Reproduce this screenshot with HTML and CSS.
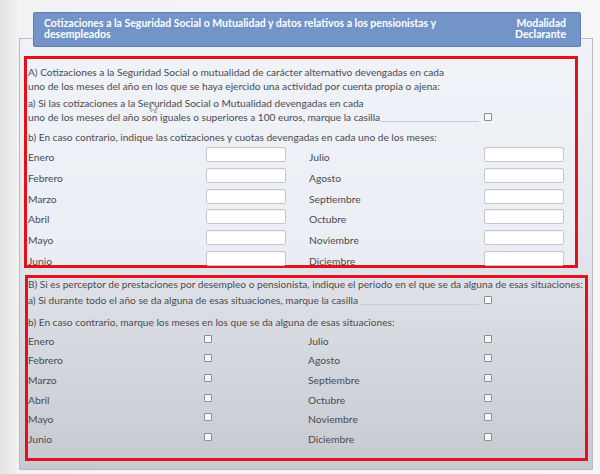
FILE: index.html
```html
<!DOCTYPE html>
<html lang="es">
<head>
<meta charset="utf-8">
<title>Cotizaciones</title>
<link rel="stylesheet" href="styles.css">
</head>
<body>
<div class="page">
  <div class="header">
    <div class="header-title">Cotizaciones a la Seguridad Social o Mutualidad y datos relativos a los pensionistas y desempleados</div>
    <div class="header-side">Modalidad<br>Declarante</div>
  </div>
  <div class="panel">
    <div class="box box-a">
      <p class="intro">A) Cotizaciones a la Seguridad Social o mutualidad de carácter alternativo devengadas en cada<br>uno de los meses del año en los que se haya ejercido una actividad por cuenta propia o ajena:</p>
      <div class="opt-a">
        <div>a) Si las cotizaciones a la Seguridad Social o Mutualidad devengadas en cada</div>
        <div class="leader-row"><span>uno de los meses del año son iguales o superiores a 100 euros, marque la casilla</span><span class="leader"></span><span class="check"></span></div>
      </div>
      <p class="opt-b">b) En caso contrario, indique las cotizaciones y cuotas devengadas en cada uno de los meses:</p>
      <div class="months-a">
        <span class="lbl">Enero</span><span class="inp"></span><span></span><span class="lbl">Julio</span><span class="inp"></span>
        <span class="lbl">Febrero</span><span class="inp"></span><span></span><span class="lbl">Agosto</span><span class="inp"></span>
        <span class="lbl">Marzo</span><span class="inp"></span><span></span><span class="lbl">Septiembre</span><span class="inp"></span>
        <span class="lbl">Abril</span><span class="inp"></span><span></span><span class="lbl">Octubre</span><span class="inp"></span>
        <span class="lbl">Mayo</span><span class="inp"></span><span></span><span class="lbl">Noviembre</span><span class="inp"></span>
        <span class="lbl">Junio</span><span class="inp"></span><span></span><span class="lbl">Diciembre</span><span class="inp"></span>
      </div>
    </div>
    <div class="box box-b">
      <p class="intro-b">B) Si es perceptor de prestaciones por desempleo o pensionista, indique el periodo en el que se da alguna de esas situaciones:</p>
      <div class="leader-row opt-ba"><span>a) Si durante todo el año se da alguna de esas situaciones, marque la casilla</span><span class="leader"></span><span class="check"></span></div>
      <p class="opt-bb">b) En caso contrario, marque los meses en los que se da alguna de esas situaciones:</p>
      <div class="months-b">
        <span class="lbl">Enero</span><span class="check"></span><span></span><span class="lbl">Julio</span><span class="check"></span>
        <span class="lbl">Febrero</span><span class="check"></span><span></span><span class="lbl">Agosto</span><span class="check"></span>
        <span class="lbl">Marzo</span><span class="check"></span><span></span><span class="lbl">Septiembre</span><span class="check"></span>
        <span class="lbl">Abril</span><span class="check"></span><span></span><span class="lbl">Octubre</span><span class="check"></span>
        <span class="lbl">Mayo</span><span class="check"></span><span></span><span class="lbl">Noviembre</span><span class="check"></span>
        <span class="lbl">Junio</span><span class="check"></span><span></span><span class="lbl">Diciembre</span><span class="check"></span>
      </div>
    </div>
  </div>
  <svg class="cursor" width="9" height="13" viewBox="0 0 9 13"><path d="M1 1 L1 10.5 L3.4 8.4 L5 12 L6.6 11.3 L5 7.8 L8 7.8 Z" fill="#f4f5f8" stroke="#8a8d94" stroke-width="0.8"/></svg>
</div>
</body>
</html>
```
FILE: styles.css
```css
html, body {
  margin: 0;
  padding: 0;
}
body {
  width: 600px;
  height: 474px;
  overflow: hidden;
  background: linear-gradient(to right, #e2e2e2 0, #f2f2f2 18px, #f6f6f6 100%);
  font-family: Lato, "Open Sans", sans-serif;
  color: #4a4b50;
}
.page {
  position: relative;
  padding: 12px 0 0 19px;
  width: 574px;
}
.header {
  position: relative;
  z-index: 1;
  margin: 0 12px 0 14px;
  height: 35px;
  box-sizing: border-box;
  background: #7294c9;
  border: 1px solid #5f7fb3;
  border-radius: 2px;
  display: flex;
  justify-content: space-between;
  padding: 5px 14px 0 10px;
  color: #ffffff;
  font-weight: 700;
  font-size: 10.5px;
  line-height: 11px;
}
.header-title {
  width: 420px;
}
.header-side {
  text-align: right;
}
.panel {
  margin-top: -9px;
  height: 432px;
  box-sizing: border-box;
  border: 1px solid #b8bbc2;
  background: linear-gradient(to bottom, #f0f2f7 0%, #e4e7ed 45%, #c7c9d0 100%);
  padding-top: 17px;
}
.box {
  border: 3px solid #e4111a;
  box-sizing: border-box;
  font-size: 10.15px;
}
.box p { margin: 0; }
.box-a {
  margin: 0 14px 0 4px;
  height: 212px;
  padding: 6px 0 0 1px;
  background: rgba(240, 243, 249, 0.6);
}
.intro {
  line-height: 14px;
}
.opt-a {
  margin-top: 4px;
  line-height: 13.5px;
}
.leader-row {
  display: flex;
  align-items: flex-end;
  width: 464px;
}
.leader {
  flex: 1;
  border-bottom: 1px solid #c9ccd3;
  margin: 0 5px 2px 1px;
  height: 1px;
}
.check {
  display: block;
  width: 8px;
  height: 8px;
  box-sizing: border-box;
  border: 1px solid #8b8d92;
  border-radius: 1px;
  background: #f7f8fa;
  flex: none;
}
.leader-row .check {
  margin-bottom: 3px;
}
.opt-b {
  margin-top: 6px !important;
  line-height: 14px;
}
.months-a {
  margin-top: 3px;
  display: grid;
  grid-template-columns: 178px 80px 23px 175px 80px;
  grid-template-rows: repeat(5, 20.8px) 14px;
  font-size: 10.3px;
}
.months-a .lbl {
  line-height: 21px;
}
.inp {
  display: block;
  height: 15px;
  box-sizing: border-box;
  background: #ffffff;
  border: 1px solid #c5c7cc;
  border-radius: 2px;
  box-shadow: inset 0 1px 1px rgba(0,0,0,0.04);
}
.box-b {
  margin: 7px 4px 0 5px;
  height: 186px;
  padding: 0;
}
.intro-b {
  line-height: 12px;
  white-space: nowrap;
}
.opt-ba {
  margin-top: 3px;
  line-height: 14px;
  width: 464px;
}
.opt-bb {
  margin-top: 8px !important;
  line-height: 14px;
}
.months-b {
  margin-top: 2px;
  display: grid;
  grid-template-columns: 176px 8px 96px 176px 8px;
  grid-auto-rows: 19.6px;
  align-items: center;
  font-size: 10.3px;
}
.months-b .check {
  margin-top: -4px;
}
.cursor {
  position: absolute;
  left: 150px;
  top: 101px;
}
```
